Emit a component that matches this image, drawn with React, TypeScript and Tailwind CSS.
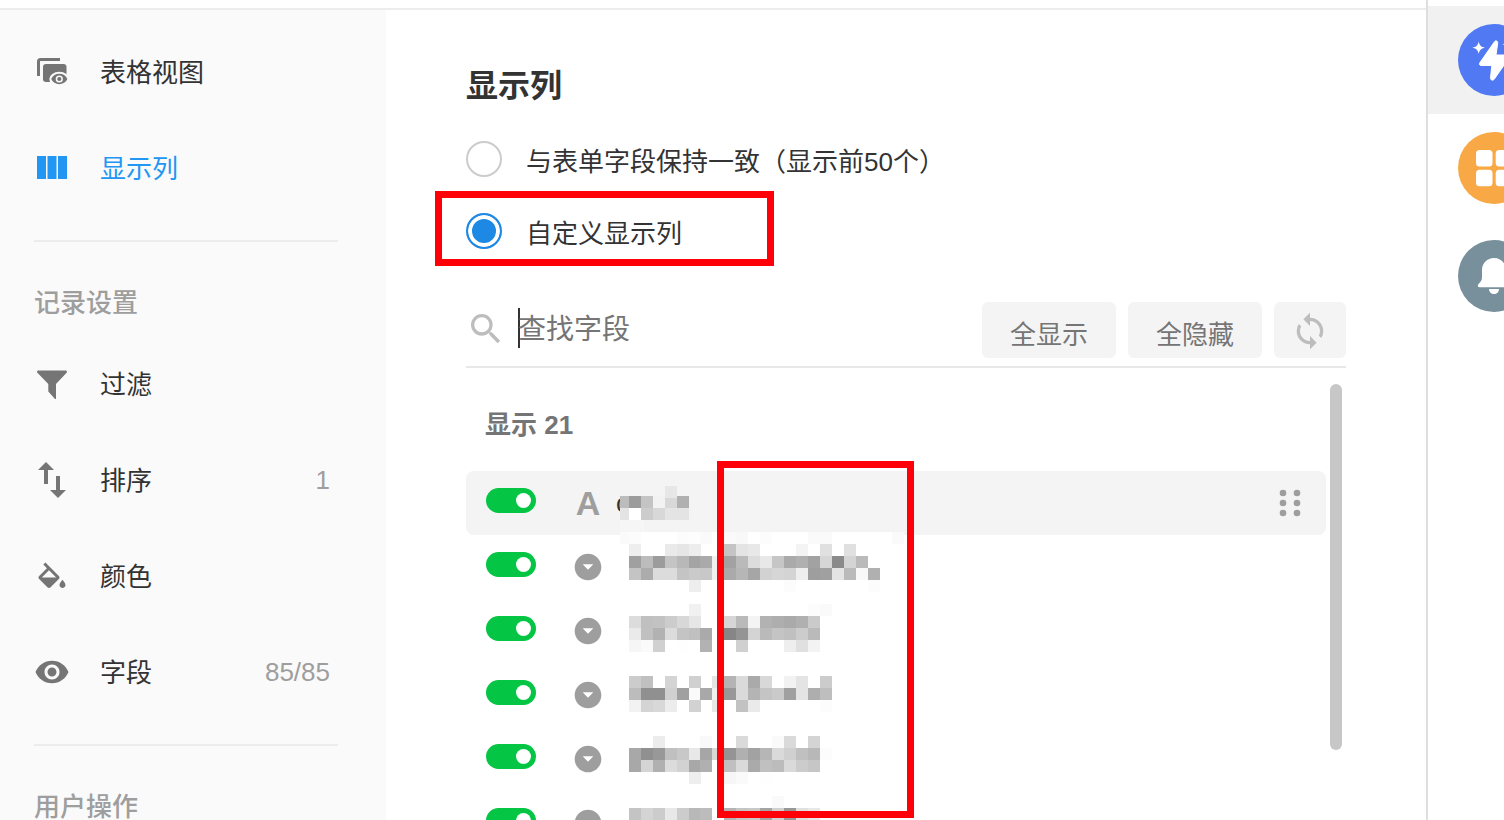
import type { ReactNode } from "react";
import {
    MdArrowDropDownCircle,
    MdSearch,
    MdSwapVert,
    MdSync,
    MdVisibility,
} from "react-icons/md";

interface INavItem {
    label: string
    icon: ReactNode
    active?: boolean
    count?: string
}

const ViewIcon = () => (
    <svg width="36" height="36" viewBox="0 0 36 36" fill="none">
        <path d="M4.5 22V7.500a2 2 0 0 1 2-2H26" stroke="#757575" strokeWidth="3" />
        <rect x="9" y="10" width="23.500" height="18" rx="3" fill="#757575" />
        <ellipse cx="25.300" cy="25" rx="10" ry="7.200" fill="#fafafa" />
        <path d="M17.200 25c1.500-3.400 4.600-5.200 8.100-5.200s6.600 1.800 8.100 5.200c-1.500 3.400-4.600 5.200-8.100 5.200s-6.600-1.800-8.100-5.200z" fill="#757575" />
        <circle cx="25.300" cy="25" r="3.600" fill="#fafafa" />
        <circle cx="25.300" cy="25" r="2.100" fill="#757575" />
    </svg>
)

const ColumnsIcon = () => (
    <svg width="36" height="36" viewBox="0 0 36 36" fill="#2196f3">
        <rect x="3" y="6" width="9" height="23" />
        <rect x="13.500" y="6" width="9" height="23" />
        <rect x="24" y="6" width="9" height="23" />
    </svg>
)

const FilterIcon = () => (
    <svg width="36" height="36" viewBox="0 0 36 36" fill="#757575">
        <path d="M4.300 4.500h27.400c1.300 0 1.700 1.300.9 2.200L22 18v15h-1l-6.700-7.500V18L3.400 6.700c-.8-.9-.4-2.200.9-2.200z" />
    </svg>
)

const PaintIcon = () => (
    <svg width="36" height="36" viewBox="0 -3 24 24" fill="#757575">
        <path d="M16.560 8.940L7.620 0 6.210 1.410l2.380 2.380-5.150 5.150c-.59.59-.59 1.540 0 2.120l5.500 5.500c.29.29.68.44 1.060.44s.77-.15 1.060-.44l5.500-5.500c.59-.58.59-1.530 0-2.120zM5.210 10L10 5.210 14.790 10H5.210zM19 11.500s-2 2.170-2 3.500c0 1.100.9 2 2 2s2-.9 2-2c0-1.330-2-3.500-2-3.500z" />
    </svg>
)

const viewItems: INavItem[] = [
    { label: "表格视图", icon: <ViewIcon /> },
    { label: "显示列", icon: <ColumnsIcon />, active: true },
]

const recordItems: INavItem[] = [
    { label: "过滤", icon: <FilterIcon /> },
    { label: "排序", icon: <MdSwapVert size={48} className="shrink-0" />, count: "1" },
    { label: "颜色", icon: <PaintIcon /> },
    { label: "字段", icon: <MdVisibility size={36} />, count: "85/85" },
]

const NavList = ({ items }: { items: INavItem[] }) => (
    <ul>
        {
            items.map((item) => (
                <li key={item.label}>
                    <a href="#" className="flex h-24 items-center pr-2">
                        <span className="flex w-9 justify-center text-[#757575]">{item.icon}</span>
                        <span className={item.active ? "ml-[30px] pt-0.5 text-[#2196f3]" : "ml-[30px] pt-0.5"}>{item.label}</span>
                        <span className="ml-auto text-[#9e9e9e]">{item.count}</span>
                    </a>
                </li>
            ))
        }
    </ul>
)

const Sidebar = () => (
    <nav className="w-[386px] shrink-0 bg-[#fafafa] pl-[34px] pr-12 pt-[14px]">
        <NavList items={viewItems} />
        <hr className="mt-6 border-t-2 border-[#ececec]" />
        <h3 className="mt-12 mb-5 leading-[26px] font-medium text-[#9e9e9e]">记录设置</h3>
        <NavList items={recordItems} />
        <hr className="mt-6 border-t-2 border-[#ececec]" />
        <h3 className="mt-12 mb-5 leading-[26px] font-medium text-[#9e9e9e]">用户操作</h3>
    </nav>
)

// grey level of each 12px cell, one string per line, ".." leaves the cell clear
const MOSAIC: Record<number, string> = {
    [-1]: "......e7",
    0: "9cc4f2d8b0",
    1: "ffccd8e4e4",
    3: "fcfffffffcfdfafffaf8fffcfffffffafafffffffffffa",
    4: "ee....eae6ed....c4e4e8......f4..e0..e0",
    5: "a0bc9cc4b8a4aaf0a2badce8c6aab0a2d68ad4ba",
    6: "c4acdcdcc4cac8f0aab6a6d2d6d4ee9ea0e4baf8b0",
    7: "..........ee..............fc............fc",
    9: "..........f1..................fcfa",
    10: "dcc0c2ccd8e6....d6baf4b2aeaab0ca",
    11: "eac0b2dcc4c0aa..8694d4bac4c0ccba",
    12: "f6fad0..fe..b2....d0......eee0f3",
    15: "ccc0..d4..d0..e4b4daaad8..f2e4..cc",
    16: "bc9090d0a0faa8f098dab4c4caa0e4aebe",
    17: "f2d4d8ec..d2..e8..c2ea..........fc",
    20: "....ec......f9....da....fada..d4",
    21: "a89098c0c8e8a6d894b0a2b6dad0c0b8fc",
    22: "a8d4b0dcd2a8b0..c0daaac0bcdaccc6",
    23: "..........ee....f6fa..fe",
    25: "........................fa",
    26: "c4d4cce8ccb8bc..b4c4c8a4d098e0e8",
}

const Mosaic = () => (
    <svg
        className="pointer-events-none absolute top-[13px] left-[154px]"
        width="288"
        height="336"
        viewBox="-8 -12 288 336"
        shapeRendering="crispEdges"
        aria-hidden="true"
    >
        <rect x="-8" y="0" width="9" height="12" fill="#bcbcbc" />
        <rect x="-8" y="12" width="9" height="12" fill="#e4e4e4" />
        <rect x="-8" y="24" width="24" height="12" fill="#f6f6f6" />
        <rect x="-8" y="36" width="9" height="12" fill="#fafafa" />
        {
            Object.entries(MOSAIC).map(([row, cells]) =>
                (cells.match(/../g) ?? []).map((level, col) => {
                    if (level === "..") return null
                    return (
                        <rect
                            key={`${row}-${col}`}
                            x={col * 12 + (col < 6 ? 1 : 0)}
                            y={Number(row) * 12 + (row === "-1" ? 2 : 0)}
                            width="12"
                            height="12"
                            fill={`#${level}${level}${level}`}
                        />
                    )
                })
            )
        }
    </svg>
)

const DragHandle = () => (
    <svg width="24" height="32" viewBox="0 0 24 32" fill="#9e9e9e">
        {[6, 16, 26].map((y) => [5, 19].map((x) => <circle key={`${x}-${y}`} cx={x} cy={y} r="3.300" />))}
    </svg>
)

const FieldRow = ({ first }: { first?: boolean }) => (
    <li className={`flex h-16 items-start rounded-lg pl-5 pr-6 ${first ? "bg-[#f4f4f4]" : ""}`}>
        <input
            type="checkbox"
            defaultChecked
            aria-label="显示字段"
            className="relative mt-[17px] h-[25px] w-[50px] appearance-none rounded-full bg-[#bdbdbd] before:absolute before:top-[5px] before:right-[5px] before:size-[15px] before:rounded-full before:bg-white checked:bg-[#04c544]"
        />
        <span className="ml-9 flex h-16 w-8 items-center justify-center text-[#9e9e9e]">
            {first ? <span className="text-[34px] leading-none font-bold">A</span> : <MdArrowDropDownCircle size={32} />}
        </span>
        {first && <span className="ml-3 leading-[64px]">c</span>}
        {first && (
            <button type="button" aria-label="拖动" className="ml-auto flex h-16 items-center">
                <DragHandle />
            </button>
        )}
    </li>
)

const radioClass = "size-9 shrink-0 appearance-none rounded-full border-2 border-[#ccc] checked:border-[#1e88e5] checked:bg-[#1e88e5] checked:shadow-[inset_0_0_0_4px_white]"
const buttonClass = "ml-3 flex h-14 shrink-0 items-center justify-center rounded-md bg-[#f4f4f4] text-[#757575]"

const ColumnSettings = () => (
    <main className="min-w-0 flex-1 px-20 pt-[50px]">
        <h2 className="text-[32px] leading-[52px] font-bold">显示列</h2>

        <div className="mt-[29px] flex flex-col gap-9">
            <label className="flex h-9 items-center gap-6">
                <input type="radio" name="columns" className={radioClass} />
                <span className="pt-1.5">与表单字段保持一致（显示前50个）</span>
            </label>
            <label className="relative flex h-9 items-center gap-6">
                <input type="radio" name="columns" defaultChecked className={radioClass} />
                <span className="pt-1.5">自定义显示列</span>
                <span className="pointer-events-none absolute -top-[22px] -left-[31px] h-[75px] w-[339px] border-7 border-[#ff0008]" />
            </label>
        </div>

        <div className="mt-[53px] flex items-center border-b-2 border-[#e8e8e8] pb-2">
            <MdSearch size={40} className="mb-0.5 shrink-0 text-[#bdbdbd]" />
            <input
                type="text"
                placeholder="查找字段"
                aria-label="查找字段"
                className="mb-1 ml-3 h-10 min-w-0 flex-1 pt-1 text-[28px] shadow-[inset_2px_0_0_#333] outline-none placeholder:text-[#757575]"
            />
            <button type="button" className={`${buttonClass} w-[134px] pt-2.5`}>全显示</button>
            <button type="button" className={`${buttonClass} w-[134px] pt-2.5`}>全隐藏</button>
            <button type="button" aria-label="刷新" className={`${buttonClass} w-[72px] pt-0.5`}>
                <MdSync size={40} className="text-[#bdbdbd]" />
            </button>
        </div>

        <div className="flex pr-1">
            <section className="flex-1">
                <h3 className="pt-9 pb-[25px] pl-[19px] leading-[42px] font-bold text-[#757575]">显示 21</h3>
                <div className="relative">
                    <ul>
                        {[0, 1, 2, 3, 4, 5].map((index) => <FieldRow key={index} first={index === 0} />)}
                    </ul>
                    <Mosaic />
                    <span className="pointer-events-none absolute -top-[10px] left-[251px] h-[357px] w-[197px] border-7 border-[#ff0008]" />
                </div>
            </section>
            <div className="mt-4 ml-1 h-[366px] w-3 rounded-full bg-[#c7c7c7]" />
        </div>
    </main>
)

const Rail = () => (
    <aside className="w-[78px] shrink-0 overflow-hidden border-l-2 border-[#dedede] pt-[6px]">
        <a href="#" aria-label="快捷" className="block bg-[#f1f1f1] py-[18px] pl-[30px]">
            <svg width="72" height="72" viewBox="0 0 72 72" fill="white" className="max-w-none">
                <circle cx="36" cy="36" r="36" fill="#5179f3" />
                <path d="M36.500 17.700L22 38.500c-1.200 1.800-.4 3 1.200 3h10.600l-1.300 12.300c-.2 2.400 2.500 3.300 3.800 1.300L51 34c1-1.600.2-3-1.500-3H38l1.700-12c.2-2-2-3-3.200-1.300z" stroke="white" strokeWidth="1" />
                <path d="M20.700 17.500c.9 4.200 2.200 5.300 6.300 6.200-4.100.9-5.400 2.100-6.300 6.300-.9-4.200-2.200-5.400-6.300-6.300 4.100-.9 5.400-2 6.300-6.200z" />
                <path d="M48 16.500c.5 2.400 1.400 3.200 3.800 3.800-2.400.5-3.300 1.300-3.800 3.700-.5-2.400-1.400-3.200-3.800-3.700 2.400-.6 3.300-1.400 3.800-3.800z" />
            </svg>
        </a>
        <a href="#" aria-label="应用" className="block py-[18px] pl-[30px]">
            <svg width="72" height="72" viewBox="0 0 72 72" fill="white" className="max-w-none">
                <circle cx="36" cy="36" r="36" fill="#f8a844" />
                <rect x="18" y="18" width="16.500" height="16.500" rx="3.500" />
                <rect x="37.700" y="18" width="16.500" height="16.500" rx="3.500" />
                <rect x="18" y="37.700" width="16.500" height="16.500" rx="3.500" />
                <rect x="37.700" y="37.700" width="16.500" height="16.500" rx="3.500" />
            </svg>
        </a>
        <a href="#" aria-label="通知" className="block py-[18px] pl-[30px]">
            <svg width="72" height="72" viewBox="0 0 72 72" fill="white" className="max-w-none">
                <circle cx="36" cy="36" r="36" fill="#78909c" />
                <path d="M36 18c-6.800 0-12 5.200-12 12v7c0 3-1 4.700-3.400 7-1.500 1.600-.9 3.300.8 3.300h29.200c1.700 0 2.300-1.700.8-3.300C49 41.700 48 40 48 37v-7c0-6.800-5.200-12-12-12z" />
                <path d="M31 49h10c0 3-2.300 5-5 5s-5-2-5-5z" />
            </svg>
        </a>
    </aside>
)

const App = () => {

    return (
        <div className="flex h-screen overflow-hidden bg-white font-['Liberation_Sans','Noto_Sans_CJK_SC',sans-serif] text-[26px] leading-[40px] text-[#333]">
            <div className="flex min-w-0 flex-1 flex-col pt-2">
                <div className="flex flex-1 border-t-2 border-[#ececec]">
                    <Sidebar />
                    <ColumnSettings />
                </div>
            </div>
            <Rail />
        </div>
    )
}

export default App
